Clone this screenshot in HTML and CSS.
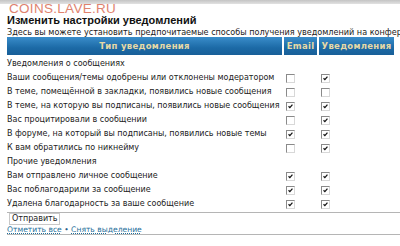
FILE: index.html
```html
<!DOCTYPE html>
<html lang="ru">
<head>
<meta charset="utf-8">
<link rel="stylesheet" href="styles.css">
</head>
<body>
<div class="topband"></div>
<div class="page">
  <div class="watermark">COINS.LAVE.RU</div>
  <h1 class="title">Изменить настройки уведомлений</h1>
  <p class="intro">Здесь вы можете установить предпочитаемые способы получения уведомлений на конференции.</p>
  <div class="grid">
    <div class="hd hd-type">Тип уведомления</div>
    <div class="hd">Email</div>
    <div class="hd">Уведомления</div>

    <div class="cell group">Уведомления о сообщениях</div><div class="cell"></div><div class="cell"></div>

    <div class="cell">Ваши сообщения/темы одобрены или отклонены модератором</div>
    <div class="cell"><span class="cb"></span></div>
    <div class="cell"><span class="cb on"><svg viewBox="0 0 9 9"><path d="M2 4.2 L3.7 6 L7 2.2" /></svg></span></div>

    <div class="cell">В теме, помещённой в закладки, появились новые сообщения</div>
    <div class="cell"><span class="cb"></span></div>
    <div class="cell"><span class="cb"></span></div>

    <div class="cell">В теме, на которую вы подписаны, появились новые сообщения</div>
    <div class="cell"><span class="cb on"><svg viewBox="0 0 9 9"><path d="M2 4.2 L3.7 6 L7 2.2" /></svg></span></div>
    <div class="cell"><span class="cb on"><svg viewBox="0 0 9 9"><path d="M2 4.2 L3.7 6 L7 2.2" /></svg></span></div>

    <div class="cell">Вас процитировали в сообщении</div>
    <div class="cell"><span class="cb"></span></div>
    <div class="cell"><span class="cb on"><svg viewBox="0 0 9 9"><path d="M2 4.2 L3.7 6 L7 2.2" /></svg></span></div>

    <div class="cell">В форуме, на который вы подписаны, появились новые темы</div>
    <div class="cell"><span class="cb on"><svg viewBox="0 0 9 9"><path d="M2 4.2 L3.7 6 L7 2.2" /></svg></span></div>
    <div class="cell"><span class="cb on"><svg viewBox="0 0 9 9"><path d="M2 4.2 L3.7 6 L7 2.2" /></svg></span></div>

    <div class="cell">К вам обратились по никнейму</div>
    <div class="cell"><span class="cb"></span></div>
    <div class="cell"><span class="cb on"><svg viewBox="0 0 9 9"><path d="M2 4.2 L3.7 6 L7 2.2" /></svg></span></div>

    <div class="cell group">Прочие уведомления</div><div class="cell"></div><div class="cell"></div>

    <div class="cell">Вам отправлено личное сообщение</div>
    <div class="cell"><span class="cb on"><svg viewBox="0 0 9 9"><path d="M2 4.2 L3.7 6 L7 2.2" /></svg></span></div>
    <div class="cell"><span class="cb on"><svg viewBox="0 0 9 9"><path d="M2 4.2 L3.7 6 L7 2.2" /></svg></span></div>

    <div class="cell">Вас поблагодарили за сообщение</div>
    <div class="cell"><span class="cb on"><svg viewBox="0 0 9 9"><path d="M2 4.2 L3.7 6 L7 2.2" /></svg></span></div>
    <div class="cell"><span class="cb on"><svg viewBox="0 0 9 9"><path d="M2 4.2 L3.7 6 L7 2.2" /></svg></span></div>

    <div class="cell">Удалена благодарность за ваше сообщение</div>
    <div class="cell"><span class="cb on"><svg viewBox="0 0 9 9"><path d="M2 4.2 L3.7 6 L7 2.2" /></svg></span></div>
    <div class="cell"><span class="cb on"><svg viewBox="0 0 9 9"><path d="M2 4.2 L3.7 6 L7 2.2" /></svg></span></div>
  </div>
  <div class="footer">
    <button class="submit" type="button">Отправить</button>
    <div class="links"><a href="#">Отметить все</a> • <a href="#">Снять выделение</a></div>
  </div>
</div>
</body>
</html>
```
FILE: styles.css
```css
html, body {
  margin: 0;
  padding: 0;
  background: #fff;
}
body {
  width: 400px;
  height: 246px;
  overflow: hidden;
  font-family: "DejaVu Sans", Verdana, sans-serif;
  color: #222;
}
.topband {
  height: 4px;
  background: linear-gradient(#c4c4c4, #e2e2e2);
}
.page {
  position: relative;
  padding-left: 7px;
}
.watermark {
  position: absolute;
  left: 9px;
  top: -3px;
  font-family: "Liberation Sans", Arial, sans-serif;
  font-size: 13.5px;
  letter-spacing: 0.3px;
  color: #dc7560;
  opacity: 0.9;
}
.title {
  margin: 0;
  padding-top: 9px;
  height: 14px;
  line-height: 14px;
  font-family: "Liberation Sans", Arial, sans-serif;
  font-size: 11px;
  font-weight: bold;
  color: #111;
}
.intro {
  margin: 0;
  height: 10px;
  line-height: 10px;
  font-size: 8.1px;
  white-space: nowrap;
  color: #222;
}
.grid {
  display: grid;
  grid-template-columns: 275px 33px 75px;
  column-gap: 2px;
  width: 387px;
}
.hd {
  height: 18px;
  line-height: 18px;
  margin-bottom: 2px;
  background: linear-gradient(#3a8dca, #1c6aa6 60%, #185f98);
  color: #e6d9a6;
  font-size: 8.5px;
  letter-spacing: 0.3px;
  font-weight: bold;
  text-align: center;
}
.cell {
  height: 14px;
  line-height: 14px;
  font-size: 8px;
  white-space: nowrap;
  display: flex;
  align-items: center;
  color: #222;
}
.cb {
  width: 9px;
  height: 9px;
  box-sizing: border-box;
  border: 1px solid;
  border-color: #8a8a8a #d8d8d8 #d8d8d8 #8a8a8a;
  background: #fff;
  margin-left: 2px;
  display: flex;
}
.cb svg {
  width: 7px;
  height: 7px;
}
.cb svg path {
  fill: none;
  stroke: #111;
  stroke-width: 1.6;
}
.footer {
  border-top: 1px solid #b5b5b5;
  border-bottom: 1px solid #b5b5b5;
  height: 21px;
  margin-top: 1px;
}
.submit {
  display: block;
  margin: 0 0 0 2px;
  padding: 0 2px;
  height: 12px;
  border: 1px solid #c8c8c8;
  background: #fff;
  font-family: "DejaVu Sans", Verdana, sans-serif;
  font-size: 8px;
  line-height: 10px;
  color: #222;
}
.links {
  font-size: 7.6px;
  line-height: 9px;
  color: #2a5c88;
}
.links a {
  color: #1f6f9a;
  text-decoration: underline dotted;
}
```
